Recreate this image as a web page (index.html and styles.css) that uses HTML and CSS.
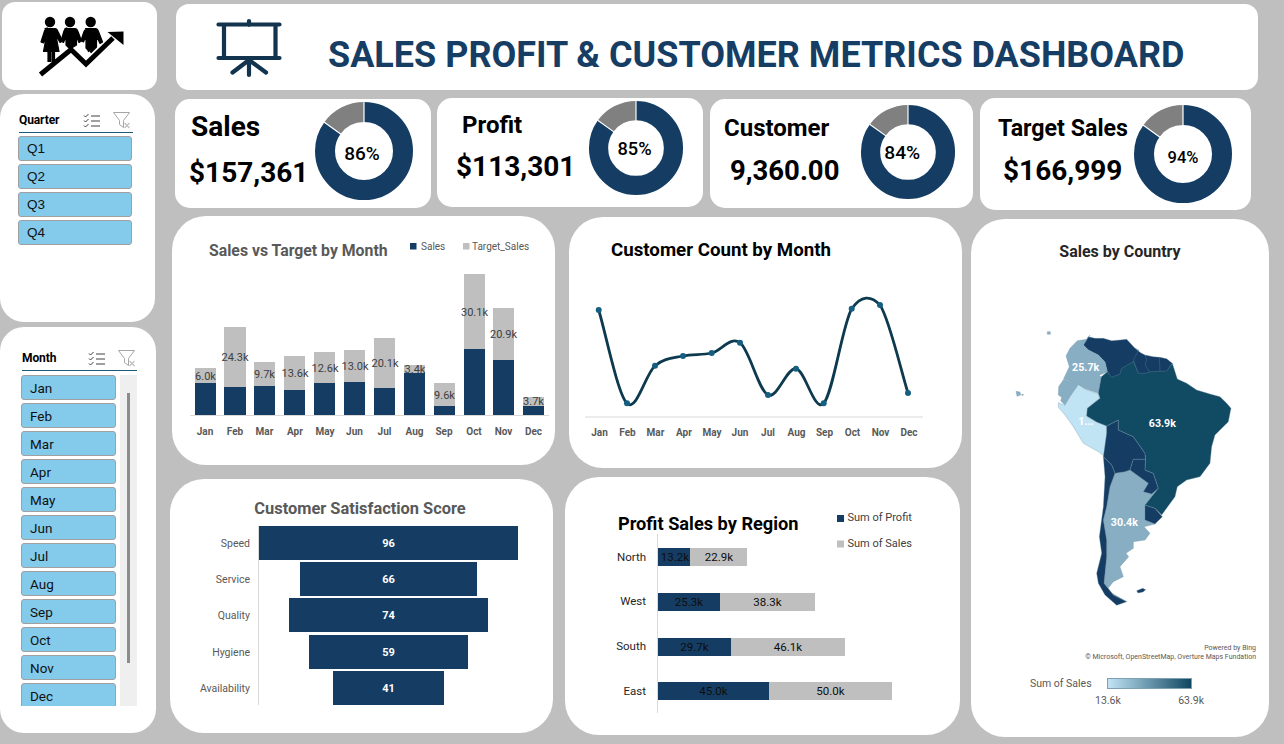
FILE: index.html
```html
<!DOCTYPE html>
<html lang="en">
<head>
<meta charset="utf-8">
<title>Sales Profit &amp; Customer Metrics Dashboard</title>
<link rel="stylesheet" href="styles.css">
</head>
<body>
<div class="dash">
  <aside class="side">
    <div class="panel logo">
      <svg class="logo-svg" viewBox="30 10 100 70" aria-hidden="true">
        <circle cx="50" cy="22" r="5.200"/><circle cx="70" cy="22" r="5.200"/><circle cx="90.700" cy="22" r="5.200"/>
        <path class="fig" d="M45 28.500h10q2 0 3 3l4.500 9.500-2.500 1.500-4-7 3 16h-4.500v10h-2.500v-10h-1.500v10h-2.500v-10h-4.500l3-16-3 7.500-2.500-1 3.500-11q1-3 3-3z"/>
        <path class="fig" d="M65 28.500h10q2 0 3 3l3.500 9.500-2.500 1.500-2.500-6v8.500l-6.500 4-4-4v-8.500l-2.500 6-2.500-1.500 3-10q1-3 3-3z"/>
        <path class="fig" d="M85.500 28.500h10q2 0 3 3l4 10.500-2.500 1.500-3.500-7v10.500l-5.500 5.500-1-2-1.500 1-1-2-1.500-1.500v-12l-2.500 6-2.500-1.500 3-9q1-2.500 3-2.500z"/>
        <polyline class="logo-arrow" points="40.500,74.500 71,49.500 86,64 113,38"/>
        <polygon points="107.500,32 123.500,31.500 123.500,45"/>
      </svg>
    </div>
    <section class="panel slicer quarter">
      <header class="slicer-head">
        <span class="slicer-title">Quarter</span>
        <svg class="ic-check" viewBox="0 0 17 15" aria-hidden="true"><path d="M1 2.500l1.500 1.500 3-3M1 7.500l1.500 1.500 3-3M1 12.500l1.500 1.500 3-3M8 3h9M8 8h9M8 13h9"/></svg>
        <svg class="ic-filter" viewBox="0 0 18 17" aria-hidden="true"><path d="M.5.500h16l-6 8v7l-4-3v-4z"/><path class="x" d="M11.500 11l5 5M16.500 11l-5 5"/></svg>
      </header>
      <ul class="items">
        <li class="item q">Q1</li><li class="item q">Q2</li><li class="item q">Q3</li><li class="item q">Q4</li>
      </ul>
    </section>
    <section class="panel slicer month">
      <header class="slicer-head">
        <span class="slicer-title">Month</span>
        <svg class="ic-check" viewBox="0 0 17 15" aria-hidden="true"><path d="M1 2.500l1.500 1.500 3-3M1 7.500l1.500 1.500 3-3M1 12.500l1.500 1.500 3-3M8 3h9M8 8h9M8 13h9"/></svg>
        <svg class="ic-filter" viewBox="0 0 18 17" aria-hidden="true"><path d="M.5.500h16l-6 8v7l-4-3v-4z"/><path class="x" d="M11.500 11l5 5M16.500 11l-5 5"/></svg>
      </header>
      <div class="month-body">
        <ul class="items">
          <li class="item">Jan</li><li class="item">Feb</li><li class="item">Mar</li><li class="item">Apr</li><li class="item">May</li><li class="item">Jun</li><li class="item">Jul</li><li class="item">Aug</li><li class="item">Sep</li><li class="item">Oct</li><li class="item">Nov</li><li class="item">Dec</li>
        </ul>
        <div class="track"><div class="thumb"></div></div>
      </div>
    </section>
  </aside>

  <main class="main">
    <header class="panel banner">
      <svg class="board" viewBox="215 18 68 60" aria-hidden="true">
        <path d="M218.500 24.500h61M218.500 58h61M224 24.500V58M275.500 24.500V58M249 25v-4M249 58v17M249 60l-16.500 12.500M249 60l17 12.500"/>
      </svg>
      <h1 class="banner-title">SALES PROFIT &amp; CUSTOMER METRICS DASHBOARD</h1>
    </header>

    <section class="kpis">
      <article class="panel kpi k-sales">
        <div class="kpi-text"><div class="kpi-label">Sales</div><div class="kpi-value">$157,361</div></div>
        <svg class="donut" viewBox="-50 -50 100 100" aria-hidden="true">
          <circle class="d-blue" r="39" pathLength="100" stroke-dasharray="85 15" transform="rotate(-90)"/>
          <circle class="d-gray" r="39" pathLength="100" stroke-dasharray="15 85" stroke-dashoffset="-85" transform="rotate(-90)"/>
          <path class="d-sep" d="M0-28V-50M-23-16.800L-40-29"/>
          <text class="d-text" x="-2" y="2">86%</text>
        </svg>
      </article>
      <article class="panel kpi k-profit">
        <div class="kpi-text"><div class="kpi-label">Profit</div><div class="kpi-value">$113,301</div></div>
        <svg class="donut" viewBox="-50 -50 100 100" aria-hidden="true">
          <circle class="d-blue" r="39" pathLength="100" stroke-dasharray="85 15" transform="rotate(-90)"/>
          <circle class="d-gray" r="39" pathLength="100" stroke-dasharray="15 85" stroke-dashoffset="-85" transform="rotate(-90)"/>
          <path class="d-sep" d="M0-28V-50M-23-16.800L-40-29"/>
          <text class="d-text" x="-1.500" y="0">85%</text>
        </svg>
      </article>
      <article class="panel kpi k-customer">
        <div class="kpi-text"><div class="kpi-label">Customer</div><div class="kpi-value">9,360.00</div></div>
        <svg class="donut" viewBox="-50 -50 100 100" aria-hidden="true">
          <circle class="d-blue" r="39" pathLength="100" stroke-dasharray="85 15" transform="rotate(-90)"/>
          <circle class="d-gray" r="39" pathLength="100" stroke-dasharray="15 85" stroke-dashoffset="-85" transform="rotate(-90)"/>
          <path class="d-sep" d="M0-28V-50M-23-16.800L-40-29"/>
          <text class="d-text d-mid" x="-6" y="1">84%</text>
        </svg>
      </article>
      <article class="panel kpi k-target">
        <div class="kpi-text"><div class="kpi-label">Target Sales</div><div class="kpi-value">$166,999</div></div>
        <svg class="donut" viewBox="-50 -50 100 100" aria-hidden="true">
          <circle class="d-blue" r="39" pathLength="100" stroke-dasharray="85 15" transform="rotate(-90)"/>
          <circle class="d-gray" r="39" pathLength="100" stroke-dasharray="15 85" stroke-dashoffset="-85" transform="rotate(-90)"/>
          <path class="d-sep" d="M0-28V-50M-23-16.800L-40-29"/>
          <text class="d-text d-small" y="3">94%</text>
        </svg>
      </article>
    </section>

    <section class="lower">
      <div class="col col-1">
        <article class="panel chart c-sales">
          <svg class="chart-svg" viewBox="172 216 383 249">
            <text class="t-title gray t-sales" x="209" y="250">Sales vs Target by Month</text>
            <rect class="navy" x="410" y="243" width="6.500" height="6.500"/><text class="t-leg" x="421" y="246.500">Sales</text>
            <rect class="silver" x="463" y="243" width="6.500" height="6.500"/><text class="t-leg" x="472" y="246.500">Target_Sales</text>

            <rect class="silver" x="195" y="368" width="21" height="15"/><rect class="navy" x="195" y="383" width="21" height="32.500"/>
            <rect class="silver" x="224" y="327" width="22" height="60"/><rect class="navy" x="224" y="387" width="22" height="28.500"/>
            <rect class="silver" x="254" y="362" width="21" height="24"/><rect class="navy" x="254" y="386" width="21" height="29.500"/>
            <rect class="silver" x="284" y="356" width="21" height="34"/><rect class="navy" x="284" y="390" width="21" height="25.500"/>
            <rect class="silver" x="314" y="352" width="21" height="31"/><rect class="navy" x="314" y="383" width="21" height="32.500"/>
            <rect class="silver" x="344" y="350" width="21" height="32"/><rect class="navy" x="344" y="382" width="21" height="33.500"/>
            <rect class="silver" x="374" y="338" width="21" height="50"/><rect class="navy" x="374" y="388" width="21" height="27.500"/>
            <rect class="silver" x="404" y="365" width="21" height="8"/><rect class="navy" x="404" y="373" width="21" height="42.500"/>
            <rect class="silver" x="434" y="383" width="21" height="23"/><rect class="navy" x="434" y="406" width="21" height="9.500"/>
            <rect class="silver" x="464" y="274" width="21" height="75"/><rect class="navy" x="464" y="349" width="21" height="66.500"/>
            <rect class="silver" x="493" y="308" width="21" height="52"/><rect class="navy" x="493" y="360" width="21" height="55.500"/>
            <rect class="silver" x="523" y="397" width="21" height="9"/><rect class="navy" x="523" y="406" width="21" height="9.500"/>
            <path class="axis" d="M190 415.500H549"/>

            <g class="t-val">
              <text x="205.500" y="376.500">6.0k</text><text x="235" y="357.500">24.3k</text><text x="264.500" y="374.500">9.7k</text><text x="295" y="373.500">13.6k</text><text x="325" y="368.500">12.6k</text><text x="355" y="366.500">13.0k</text><text x="385" y="363.500">20.1k</text><text x="415" y="369.500">3.4k</text><text x="444.500" y="395.500">9.6k</text><text x="474.500" y="312.500">30.1k</text><text x="503.500" y="334.500">20.9k</text><text x="533.500" y="401.500">3.7k</text>
            </g>
            <g class="t-month">
              <text x="205" y="431.500">Jan</text><text x="235" y="431.500">Feb</text><text x="264.500" y="431.500">Mar</text><text x="295" y="431.500">Apr</text><text x="325" y="431.500">May</text><text x="354.500" y="431.500">Jun</text><text x="384.500" y="431.500">Jul</text><text x="414.500" y="431.500">Aug</text><text x="444" y="431.500">Sep</text><text x="474" y="431.500">Oct</text><text x="503.500" y="431.500">Nov</text><text x="533.500" y="431.500">Dec</text>
            </g>
          </svg>
        </article>
        <article class="panel chart c-satisfaction">
          <svg class="chart-svg" viewBox="170 479 383 254">
            <text class="t-title gray mid t-sat" x="360" y="508">Customer Satisfaction Score</text>
            <path class="axis" d="M258.500 526V705"/>
            <rect class="navy" x="259" y="526" width="259" height="34"/>
            <rect class="navy" x="300" y="562" width="177" height="34"/>
            <rect class="navy" x="289" y="598" width="199" height="34"/>
            <rect class="navy" x="309" y="635" width="159" height="34"/>
            <rect class="navy" x="333" y="671" width="111" height="34"/>
            <g class="t-cat">
              <text x="250" y="543">Speed</text><text x="250" y="579">Service</text><text x="250" y="615">Quality</text><text x="250" y="652">Hygiene</text><text x="250" y="688">Availability</text>
            </g>
            <g class="t-score">
              <text x="388.500" y="543">96</text><text x="388.500" y="579">66</text><text x="388.500" y="615">74</text><text x="388.500" y="652">59</text><text x="388.500" y="688">41</text>
            </g>
          </svg>
        </article>
      </div>

      <div class="col col-2">
        <article class="panel chart c-customer">
          <svg class="chart-svg" viewBox="569 217 393 251">
            <text class="t-title big t-count" x="611" y="249.500">Customer Count by Month</text>
            <path class="axis" d="M585 417H923"/>
            <path class="line" d="M598.700 310C605.700 333 617.600 394 627 403.300C636.400 412.600 645.700 373.600 655 365.700C664.300 357.800 673.550 358.100 683 356C692.450 353.900 702.200 355.200 711.700 353C721.200 350.800 730.600 335.700 740 342.700C749.400 349.700 758.700 390.700 768 395C777.300 399.300 786.700 367.300 796 368.700C805.300 370.100 814.400 413.300 823.700 403.300C833 393.300 842.300 325.100 851.700 308.700C861.100 295.500 870.600 295 880 305C889.400 319 901 371 908 393"/>
            <g class="dots">
              <circle cx="598.700" cy="310" r="3"/><circle cx="627" cy="403.300" r="3"/><circle cx="655" cy="365.700" r="3"/><circle cx="683" cy="356" r="3"/><circle cx="711.700" cy="353" r="3"/><circle cx="740" cy="342.700" r="3"/><circle cx="768" cy="395" r="3"/><circle cx="796" cy="368.700" r="3"/><circle cx="823.700" cy="403.300" r="3"/><circle cx="851.700" cy="308.700" r="3"/><circle cx="880" cy="305" r="3"/><circle cx="908" cy="393" r="3"/>
            </g>
            <g class="t-month">
              <text x="599.500" y="432">Jan</text><text x="627.500" y="432">Feb</text><text x="655.500" y="432">Mar</text><text x="684" y="432">Apr</text><text x="712" y="432">May</text><text x="740" y="432">Jun</text><text x="768" y="432">Jul</text><text x="796.500" y="432">Aug</text><text x="824.500" y="432">Sep</text><text x="852.500" y="432">Oct</text><text x="880.500" y="432">Nov</text><text x="909" y="432">Dec</text>
            </g>
          </svg>
        </article>
        <article class="panel chart c-region">
          <svg class="chart-svg" viewBox="565 477 395 258">
            <text class="t-title big t-region" x="618" y="523">Profit Sales by Region</text>
            <rect class="navy" x="837" y="515" width="7" height="7"/><text class="t-rleg" x="847.500" y="517.500">Sum of Profit</text>
            <rect class="silver" x="837" y="540.500" width="7" height="7"/><text class="t-rleg" x="847.500" y="543.500">Sum of Sales</text>
            <path class="axis" d="M657.500 534V713"/>
            <rect class="navy" x="658" y="548" width="32" height="18"/><rect class="silver" x="690" y="548" width="57" height="18"/>
            <rect class="navy" x="658" y="593" width="62" height="18"/><rect class="silver" x="720" y="593" width="95" height="18"/>
            <rect class="navy" x="658" y="638" width="73" height="18"/><rect class="silver" x="731" y="638" width="114" height="18"/>
            <rect class="navy" x="658" y="682" width="111" height="18"/><rect class="silver" x="769" y="682" width="123" height="18"/>
            <g class="t-cat black">
              <text x="646" y="557">North</text><text x="646" y="601">West</text><text x="646" y="646">South</text><text x="646" y="691">East</text>
            </g>
            <g class="t-rval">
              <text x="675" y="557">13.2k</text><text x="719" y="557">22.9k</text>
              <text x="689" y="601.500">25.3k</text><text x="767.500" y="601.500">38.3k</text>
              <text x="694.500" y="646.500">29.7k</text><text x="788" y="646.500">46.1k</text>
              <text x="713.500" y="691">45.0k</text><text x="830.500" y="691">50.0k</text>
            </g>
          </svg>
        </article>
      </div>

      <article class="panel map">
        <h2 class="map-title">Sales by Country</h2>
        <svg class="map-svg" viewBox="3 0 894 960">
          <g class="land">
            <path class="m-navy" d="M340 135L347 122L355 110L375 115L400 115L425 122L450 120L470 118L495 145L512 158L525 165L550 170L570 172L590 176L607 190L590 218L540 228L450 238L425 238L412 215L405 186L385 165L355 150Z"/>
            <path class="m-line" d="M495 145L506 150L490 180L505 222M525 165L530 180L525 195L540 218M568 172L570 214"/>
            <path class="m-mid" d="M360 105L350 118L322 122L300 145L288 168L298 200L281 236L325 254L345 266L385 280L394 232L388 226L412 215L405 186L385 165L355 150L340 135Z"/>
            <path class="m-mid" d="M281 238L266 260L265 285L275 292L272 302L285 316L300 290L325 254Z"/>
            <path class="m-pale" d="M265 308L285 316L300 290L325 254L345 268L385 282L388 295L352 325L350 350L380 366L410 378L410 400L405 470L385 455L340 430L310 380L285 345L265 322Z"/>
            <path class="m-mid" d="M435 520L465 515L480 510L535 550L520 575L545 582L565 565L525 615L525 660L555 672L522 680L540 700L525 720L490 725L490 745L468 760L476 770L450 800L460 830L430 845L410 870L435 885L470 905L430 885L402 850L410 770L410 720L400 660L410 620L420 560Z"/>
            <path class="m-navy" d="M410 378L445 360L445 390L490 410L525 460L527 478L490 478L480 510L465 515L435 520L425 495L400 470L410 400Z"/>
            <path class="m-navy" d="M490 478L527 478L525 510L550 520L565 565L545 582L520 575L535 550L480 510Z"/>
            <path class="m-navy" d="M525 615L555 625L577 650L555 672L525 660Z"/>
            <path class="m-navy" d="M400 470L425 495L435 520L420 560L410 620L400 660L410 720L410 770L402 850L430 885L470 905L440 916L405 885L385 850L380 820L395 760L388 710L400 620L405 530Z"/>
            <path class="m-deep" d="M394 230L412 215L425 232L450 222L455 205L490 185L505 220L525 220L545 215L570 214L590 213L607 190L622 237L650 250L680 270L720 282L750 290L770 310L783 325L775 365L735 405L725 440L720 490L690 530L650 540L622 560L615 590L575 645L555 625L525 615L565 565L550 520L525 510L527 478L525 460L490 410L445 390L445 360L410 378L380 366L350 348L352 325L390 295L385 280Z"/>
            <path class="m-mid" d="M232 95h9v8h-9zM138 274l12 2 2 9-11 4zM155 283h5v3h-5z"/>
            <path class="m-navy" d="M500 872l18-7 9 4-8 7-15 3z"/>
          </g>
          <g class="t-map">
            <text x="347" y="203">25.7k</text><text x="348" y="365">1...</text><text x="577" y="370">63.9k</text><text x="463" y="668">30.4k</text>
          </g>
        </svg>
        <p class="attr attr-1">Powered by Bing</p>
        <p class="attr">© Microsoft, OpenStreetMap, Overture Maps Fundation</p>
        <div class="scale">
          <span class="scale-name">Sum of Sales</span>
          <div class="scale-bar"><div class="scale-grad"></div><div class="scale-ends"><span>13.6k</span><span>63.9k</span></div></div>
        </div>
      </article>
    </section>
  </main>
</div>
</body>
</html>
```
FILE: styles.css
```css
* { box-sizing: border-box; }
html, body { margin: 0; padding: 0; }
body {
  width: 1284px;
  height: 744px;
  overflow: hidden;
  background: #bfbfbf;
  font-family: Roboto, "Liberation Sans", sans-serif;
  color: #000;
}
.dash { display: flex; width: 1284px; height: 744px; }
.panel { background: #fff; }

/* left column */
.side { display: flex; flex-direction: column; width: 157px; flex: none; }
.logo { width: 155px; height: 88px; margin: 2px 0 0 2px; border-radius: 13px; display: flex; }
.logo-svg { width: 100px; height: 70px; margin: 8px 0 0 28px; fill: #000; }
.fig { stroke: #000; stroke-width: 1.2; stroke-linejoin: round; }
.logo-arrow { fill: none; stroke: #000; stroke-width: 5; }
.slicer { border-radius: 24px; }
.quarter { width: 155px; height: 228px; margin-top: 4px; padding: 18px 0 0 18px; }
.month { width: 156px; height: 406px; margin-top: 5px; padding: 23px 0 0 21px; }
.slicer-head {
  display: flex;
  align-items: center;
  height: 21px;
  width: 114px;
  margin-left: 1px;
  border-bottom: 1px solid #1b5a78;
  padding-bottom: 4px;
}
.month .slicer-head { width: 115px; }
.slicer-title { font-size: 12px; font-weight: 700; width: 64px; letter-spacing: -.1px; }
.month .slicer-title { width: 66px; }
.ic-check { width: 17px; height: 15px; fill: none; stroke: #404040; stroke-width: 1; }
.ic-filter { width: 18px; height: 17px; margin-left: 13px; fill: none; stroke: #a6a6a6; stroke-width: 1; }
.ic-filter .x { stroke: #bfbfbf; stroke-width: 1.2; }
.items { list-style: none; margin: 3px 0 0; padding: 0; display: flex; flex-direction: column; gap: 3px; }
.item {
  flex: none;
  height: 25px;
  width: 95px;
  padding: 1px 0 0 8px;
  background: #83caeb;
  border: 1px solid #a0a0a0;
  border-radius: 3px;
  font-size: 13.500px;
  line-height: 22px;
  color: #111;
}
.item.q { width: 114px; font-family: "Liberation Sans", sans-serif; font-size: 13.500px; }
.month-body { display: flex; gap: 4px; height: 335px; overflow: hidden; margin-top: 0; }
.month-body .items { height: 332px; overflow: hidden; margin-top: 4px; }
.track { width: 17px; height: 331px; margin-top: 4px; background: #efefef; padding: 18px 0 0 7px; }
.thumb { width: 3px; height: 270px; background: #8c8c8c; }

/* main */
.main { width: 1127px; flex: none; display: flex; flex-direction: column; }
.banner {
  width: 1082px;
  height: 86px;
  margin: 4px 0 0 19px;
  border-radius: 13px;
  display: flex;
  align-items: flex-start;
}
.board { width: 68px; height: 60px; margin: 14px 0 0 39px; fill: none; stroke: #12344e; stroke-width: 4.200; stroke-linecap: round; }
.banner-title {
  margin: 30px 0 0 45px;
  font-size: 36px;
  line-height: 42px;
  font-weight: 700;
  color: #163d64;
  white-space: nowrap;
}

/* KPI row */
.kpis { display: flex; align-items: flex-start; height: 112px; margin-top: 8px; padding-left: 18px; }
.kpi { display: flex; justify-content: space-between; align-items: flex-start; height: 109px; border-radius: 15px; }
.kpi-text { white-space: nowrap; }
.kpi-label { font-size: 24px; line-height: 30px; font-weight: 700; }
.kpi-value { font-size: 28px; line-height: 34px; font-weight: 700; }
.donut { flex: none; }
.d-blue, .d-gray { fill: none; stroke-width: 20; }
.d-blue { stroke: #153d64; }
.d-gray { stroke: #808080; }
.d-sep { stroke: #fff; stroke-width: 1.2; fill: none; }
.d-text { font-size: 19px; font-weight: 500; text-anchor: middle; dominant-baseline: central; fill: #000; }
.d-mid { font-size: 20px; }
.d-small { font-size: 16.500px; }

.k-sales { width: 256px; margin-top: 1px; }
.k-sales .kpi-text { padding: 13px 0 0 14px; }
.k-sales .kpi-label { font-size: 28px; padding-left: 2px; }
.k-sales .kpi-value { margin-top: 14px; }
.k-sales .donut { width: 100px; height: 100px; margin: 2px 17px 0 0; }

.k-profit { width: 266px; margin-left: 6px; }
.k-profit .kpi-text { padding: 12px 0 0 19px; }
.k-profit .kpi-label { padding-left: 6px; }
.k-profit .kpi-value { margin-top: 10px; }
.k-profit .donut { width: 96px; height: 96px; margin: 2px 19px 0 0; }

.k-customer { width: 263px; margin: 1px 0 0 7px; }
.k-customer .kpi-text { padding: 14px 0 0 14px; }
.k-customer .kpi-value { margin: 11px 0 0 6px; font-size: 27.500px; }
.k-customer .donut { width: 96px; height: 96px; margin: 5px 17px 0 0; }

.k-target { width: 271px; height: 112px; margin-left: 7px; }
.k-target .kpi-text { padding: 15px 0 0 18px; }
.k-target .kpi-label { font-size: 23.200px; }
.k-target .kpi-value { margin: 11px 0 0 5px; }
.k-target .donut { width: 100px; height: 100px; margin: 6px 18px 0 0; }

/* lower area */
.lower { display: flex; margin-top: 6px; align-items: flex-start; }
.col { display: flex; flex-direction: column; flex: none; }
.col-1 { width: 385px; margin-left: 13px; }
.col-2 { width: 397px; margin-left: 10px; }
.chart { border-radius: 34px; overflow: hidden; }
.chart-svg { display: block; width: 100%; height: 100%; }
.c-sales { width: 383px; height: 249px; margin-left: 2px; }
.c-satisfaction { width: 383px; height: 254px; margin-top: 14px; }
.c-customer { width: 393px; height: 251px; margin: 1px 0 0 4px; }
.c-region { width: 395px; height: 258px; margin-top: 9px; }

.navy { fill: #153d64; }
.silver { fill: #bfbfbf; }
.axis { stroke: #d9d9d9; stroke-width: 1; fill: none; }
.line { fill: none; stroke: #0e3a50; stroke-width: 2.800; stroke-linecap: round; }
.dots { fill: #156082; }
.t-title { font-size: 15.500px; font-weight: 700; dominant-baseline: central; }
.t-title.big { font-size: 18px; fill: #000; }
.t-title.gray { fill: #595959; }
.t-title.mid { text-anchor: middle; }
.t-title.t-sales { font-size: 15.800px; }
.t-title.t-sat { font-size: 16.400px; }
.t-title.t-count { font-size: 18.700px; }
.t-title.t-region { font-size: 18.200px; }
.t-leg { font-size: 10px; fill: #595959; dominant-baseline: central; }
.t-rleg { font-size: 11px; fill: #404040; dominant-baseline: central; }
.t-val text { font-size: 11px; fill: #404040; text-anchor: middle; dominant-baseline: central; }
.t-month text { font-size: 10px; font-weight: 700; fill: #595959; text-anchor: middle; dominant-baseline: central; }
.t-cat text { font-size: 10.500px; fill: #595959; text-anchor: end; dominant-baseline: central; }
.t-cat.black text { font-size: 11.500px; fill: #262626; }
.t-score text { font-size: 11px; font-weight: 700; fill: #fff; text-anchor: middle; dominant-baseline: central; }
.t-rval text { font-size: 11.500px; fill: #0d0d0d; text-anchor: middle; dominant-baseline: central; }

/* map */
.map {
  width: 298px;
  height: 518px;
  margin: 3px 0 0 9px;
  border-radius: 34px;
  flex: none;
  display: flex;
  flex-direction: column;
  overflow: hidden;
}
.map-title { margin: 23px 0 0; height: 20px; font-size: 16px; line-height: 20px; font-weight: 700; color: #262626; text-align: center; }
.map-svg { display: block; width: 298px; height: 320px; margin-top: 38px; flex: none; }
.m-navy { fill: #153d64; }
.m-deep { fill: #114a63; }
.m-mid { fill: #88aec3; }
.m-pale { fill: #c1e4f5; }
.land path { stroke: #6f93a8; stroke-width: 1; stroke-linejoin: round; }
.land .m-line { fill: none; stroke: #47708c; stroke-width: 1.500; }
.t-map text { font-size: 32px; font-weight: 700; fill: #fff; text-anchor: middle; dominant-baseline: central; }
.attr { margin: 0; padding-right: 13px; font-size: 7px; line-height: 9px; color: #595959; text-align: right; white-space: nowrap; }
.attr-1 { margin-top: 24px; }
.scale { display: flex; margin: 16px 0 0 59px; }
.scale-name { width: 77px; font-size: 10.500px; line-height: 12px; color: #595959; }
.scale-bar { width: 85px; }
.scale-grad { height: 11px; background: linear-gradient(90deg, #c1e4f5, #0f4761); border: 1px solid #7f9fb2; }
.scale-ends { display: flex; justify-content: space-between; margin: 5px -12px 0; font-size: 10.500px; line-height: 13px; color: #595959; }
```
